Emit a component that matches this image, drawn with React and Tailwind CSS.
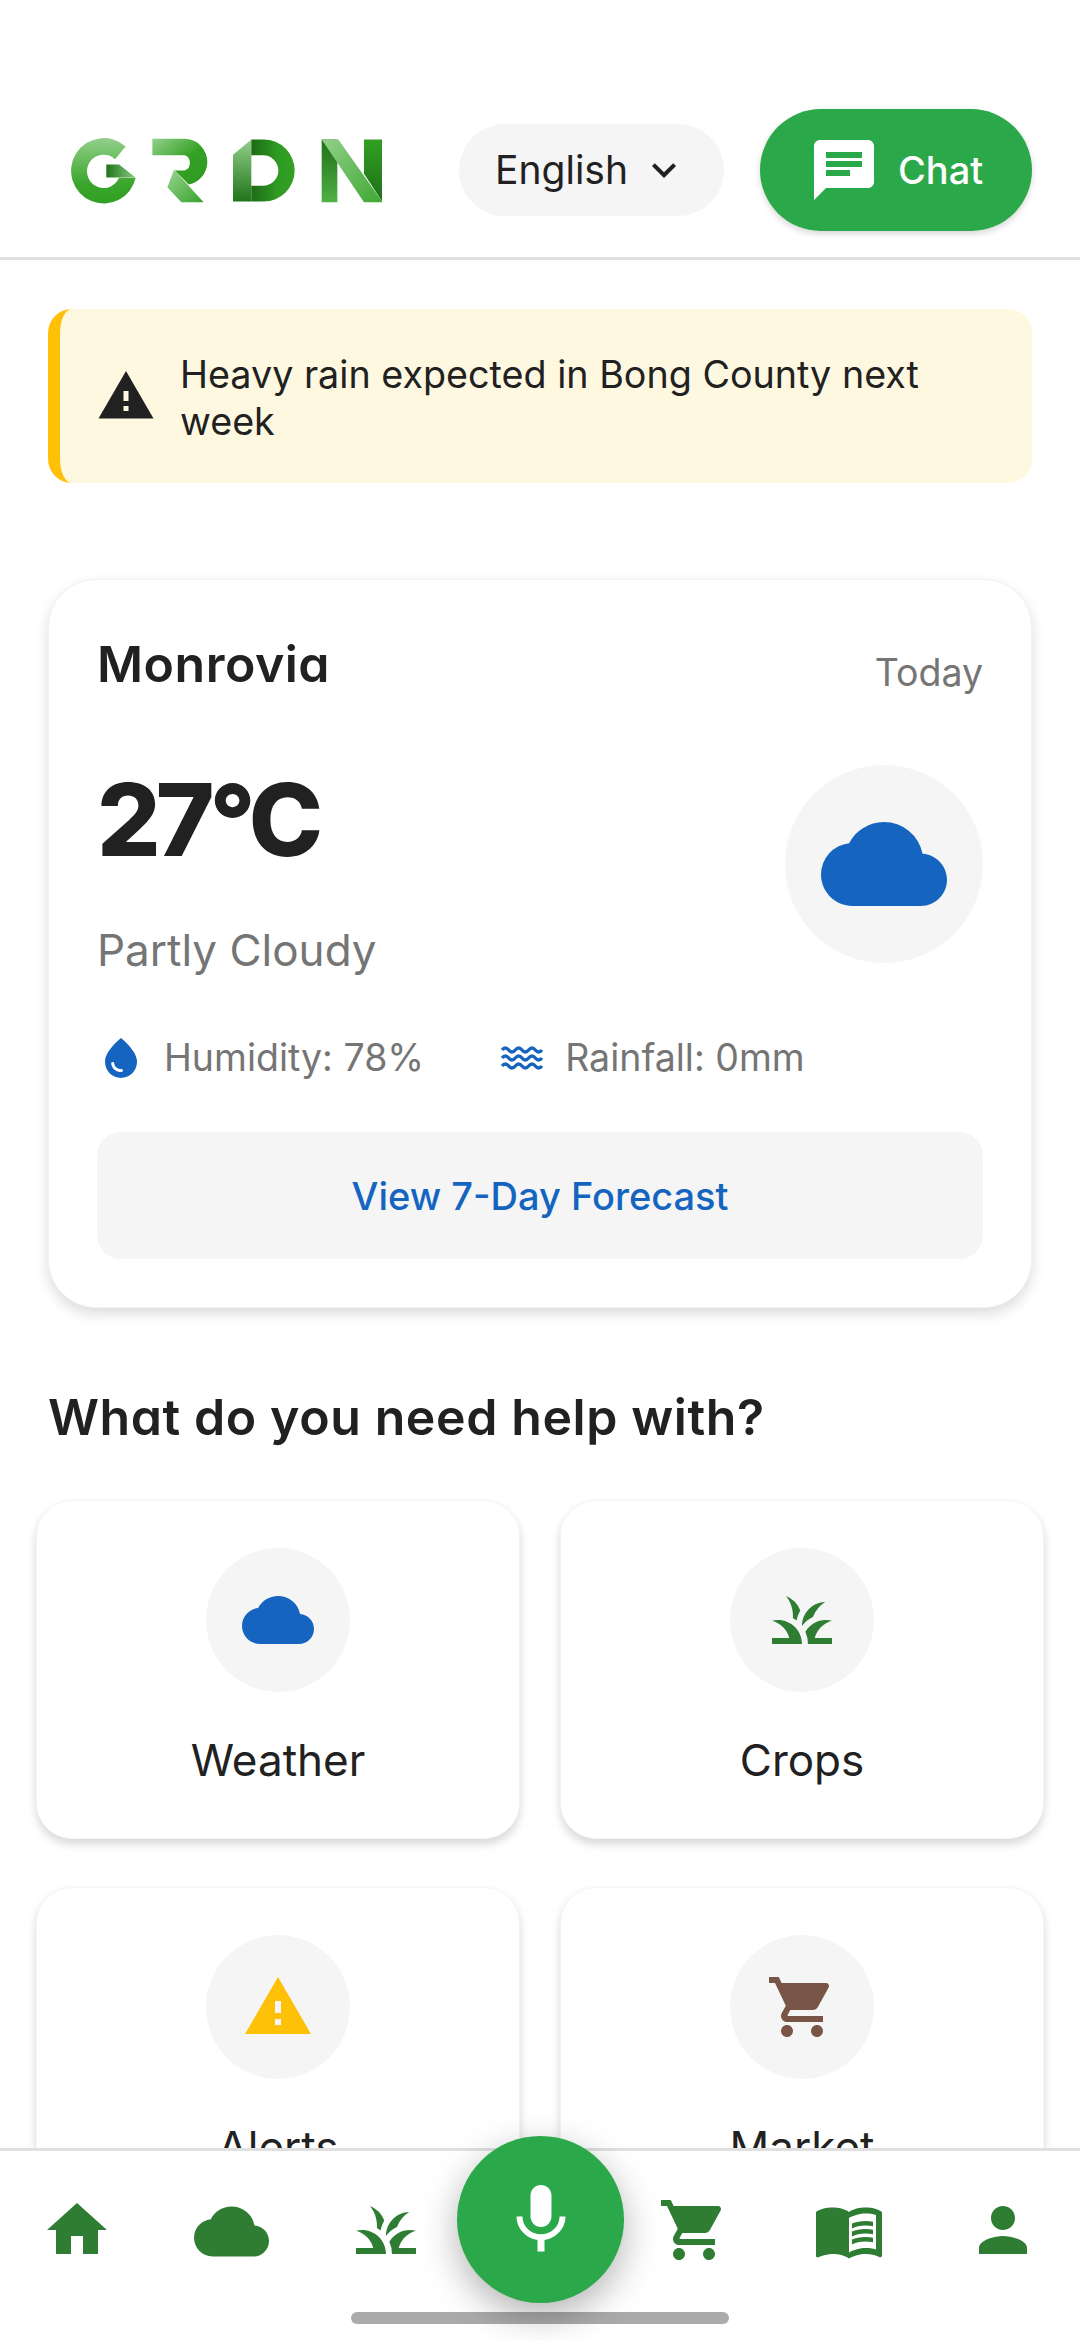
import {
  MdChat,
  MdCloud,
  MdGrass,
  MdHome,
  MdKeyboardArrowDown,
  MdMenuBook,
  MdMic,
  MdPerson,
  MdShoppingCart,
  MdWarning,
  MdWaterDrop,
} from "react-icons/md";

const tiles = [
  { label: "Weather", Icon: MdCloud, color: "text-[#1565c0]" },
  { label: "Crops", Icon: MdGrass, color: "text-[#2e7d32]" },
  { label: "Alerts", Icon: MdWarning, color: "text-[#ffc107]" },
  { label: "Market", Icon: MdShoppingCart, color: "text-[#795548]" },
];

const Logo = () => (
  <svg viewBox="85 80 945 200" className="ml-5 h-[67px] w-[315px]" role="img" aria-label="GRDN">
    <defs>
      <linearGradient id="lightTop" x1="0" y1="0" x2="0" y2="1">
        <stop offset="0" stopColor="#93d08b" />
        <stop offset="0.7" stopColor="#3ba52c" />
        <stop offset="1" stopColor="#30a022" />
      </linearGradient>
      <linearGradient id="gBar" x1="0" y1="0" x2="1" y2="0">
        <stop offset="0" stopColor="#1f7419" />
        <stop offset="1" stopColor="#8ccb82" />
      </linearGradient>
      <linearGradient id="rTop" x1="0" y1="0" x2="1" y2="1">
        <stop offset="0" stopColor="#93d08b" />
        <stop offset="0.55" stopColor="#33a024" />
        <stop offset="1" stopColor="#2f9a21" />
      </linearGradient>
      <linearGradient id="rLeg" x1="0" y1="0" x2="1" y2="1">
        <stop offset="0" stopColor="#9ad493" />
        <stop offset="1" stopColor="#37a329" />
      </linearGradient>
      <linearGradient id="dLeft" x1="0" y1="0" x2="0" y2="1">
        <stop offset="0" stopColor="#93d08b" />
        <stop offset="1" stopColor="#1f7419" />
      </linearGradient>
      <linearGradient id="dRight" x1="0" y1="0" x2="1" y2="0">
        <stop offset="0" stopColor="#1d6b16" />
        <stop offset="0.6" stopColor="#2f9a22" />
        <stop offset="1" stopColor="#33a024" />
      </linearGradient>
      <linearGradient id="nLeft" x1="0" y1="0" x2="0" y2="1">
        <stop offset="0" stopColor="#1e7018" />
        <stop offset="1" stopColor="#50b044" />
      </linearGradient>
      <linearGradient id="nRight" x1="0" y1="0" x2="0" y2="1">
        <stop offset="0" stopColor="#32a022" />
        <stop offset="1" stopColor="#1e6f18" />
      </linearGradient>
      <linearGradient id="nDiag" x1="0" y1="0" x2="1" y2="1">
        <stop offset="0" stopColor="#93d08b" />
        <stop offset="1" stopColor="#3fa832" />
      </linearGradient>
    </defs>
    {/* G */}
    <path
      d="M258 108A98 98 0 1 0 288 202H238A50 50 0 1 1 226 146Z"
      fill="url(#lightTop)"
    />
    <path d="M200 162H238L288 201H200Z" fill="url(#gBar)" />
    {/* R */}
    <path
      d="M338 85H435A68 70 0 0 1 503 155A68 70 0 0 1 447 222L405 180H435A22 24 0 0 0 435 134H338Z"
      fill="url(#rTop)"
    />
    <path d="M403 178L492 275H425L383 230Z" fill="url(#rLeg)" />
    {/* D */}
    <path d="M580 133L635 87V273H580Z" fill="url(#dLeft)" />
    <path
      d="M635 87H672A93 93 0 0 1 672 273H635V226H670A46 46 0 0 0 670 134H635Z"
      fill="url(#dRight)"
    />
    {/* N */}
    <path d="M846 87H893V275H846Z" fill="url(#nLeft)" />
    <path d="M973 87H1027V272L973 190Z" fill="url(#nRight)" />
    <path d="M846 87H896L1027 272V275H973Z" fill="url(#nDiag)" />
  </svg>
);

// three wavy lines, the rainfall mark on the weather card
const RainWaves = () => (
  <svg viewBox="0 0 24 24" className="ml-[74px] h-[48px] w-[48px] text-[#1565c0]" fill="none" stroke="currentColor" strokeWidth="1.7">
    <path d="M2 8q1.67-2 3.33 0t3.33 0t3.33 0t3.33 0t3.33 0t3.33 0" />
    <path d="M2 12q1.67-2 3.33 0t3.33 0t3.33 0t3.33 0t3.33 0t3.33 0" />
    <path d="M2 16q1.67-2 3.33 0t3.33 0t3.33 0t3.33 0t3.33 0t3.33 0" />
  </svg>
);

const Header = () => (
  <header className="flex h-[260px] shrink-0 items-end border-b-[3px] border-[#e0e0e0] pb-[26px] pl-[48px] pr-[48px]">
    <div className="flex h-[122px] w-full items-center justify-between">
      <Logo />
      <div className="flex items-center gap-[36px]">
        <div className="flex h-[92px] items-center gap-[12px] rounded-full bg-[#f5f5f5] pl-[36px] pr-[36px] text-[39px] text-[#212121]">
          <span>English</span>
          <MdKeyboardArrowDown size={48} />
        </div>
        <div className="flex h-[122px] w-[272px] items-center gap-[18px] rounded-full bg-[#2ba84a] pl-[48px] text-[38px] font-medium text-white shadow-[0_3px_6px_rgba(0,0,0,0.16)]">
          <MdChat size={72} />
          <span>Chat</span>
        </div>
      </div>
    </div>
  </header>
);

const WeatherCard = () => (
  <section className="mt-[96px] rounded-[48px] border border-[#f2f2f2] bg-white p-[48px] shadow-[0_6px_14px_rgba(0,0,0,0.14)]">
    <div className="flex items-end justify-between">
      <p className="text-[50px] font-semibold leading-[72px] tracking-[0.01em] text-[#212121] [font-feature-settings:'cv11']">Monrovia</p>
      <p className="text-[37.5px] leading-[54px] text-[#757575]">Today</p>
    </div>
    <div className="mt-[50px] flex items-center justify-between">
      <div>
        <p className="text-[100px] font-extrabold leading-[140px] tracking-[-0.05em] text-[#212121]">27°C</p>
        <p className="mt-[32px] text-[44px] leading-[56px] text-[#757575]">Partly Cloudy</p>
      </div>
      <div className="flex h-[198px] w-[198px] items-center justify-center rounded-full bg-[#f5f5f5] text-[#1565c0]">
        <MdCloud size={126} />
      </div>
    </div>
    <div className="mt-[53px] flex items-center text-[37.5px] leading-[54px] text-[#757575]">
      <MdWaterDrop size={48} className="text-[#1565c0]" />
      <span className="ml-[19px]">Humidity: 78%</span>
      <RainWaves />
      <span className="ml-[19px]">Rainfall: 0mm</span>
    </div>
    <div className="mt-[47px] flex h-[127px] items-center justify-center rounded-[24px] bg-[#f5f5f5] pt-[2px] text-[38px] font-medium text-[#1565c0]">
      View 7-Day Forecast
    </div>
  </section>
);

const Tile = ({ label, Icon, color }) => (
  <div className="flex h-[339px] flex-col items-center rounded-[36px] border border-[#f5f5f5] bg-white pt-[47px] shadow-[0_5px_10px_rgba(0,0,0,0.16)]">
    <div className={`flex h-[144px] w-[144px] items-center justify-center rounded-full bg-[#f5f5f5] ${color}`}>
      <Icon size={72} />
    </div>
    <p className="mt-[40px] text-[44px] leading-[56px] text-[#212121]">{label}</p>
  </div>
);

const BottomNav = () => (
  <nav className="relative z-10 grid h-[192px] shrink-0 grid-cols-7 border-t-[3px] border-[#e0e0e0] bg-white pb-[72px] pt-[43px] text-[#2e7d32]">
    <div className="flex justify-center"><MdHome size={72} /></div>
    <div className="flex justify-center"><MdCloud size={75} /></div>
    <div className="flex justify-center"><MdGrass size={72} /></div>
    <div />
    <div className="flex justify-center"><MdShoppingCart size={72} /></div>
    <div className="flex justify-center"><MdMenuBook size={72} /></div>
    <div className="flex justify-center"><MdPerson size={72} /></div>

    {/* home indicator */}
    <div className="absolute bottom-[16px] left-[351px] h-[12px] w-[378px] rounded-full bg-[#ababab]" />
    {/* mic button */}
    <div className="absolute left-[457px] top-[-15px] flex h-[167px] w-[167px] items-center justify-center rounded-full bg-[#2ba84a] text-white shadow-[0_12px_36px_rgba(0,0,0,0.3)]">
      <MdMic size={84} />
    </div>
  </nav>
);

export default function App() {
  return (
    <div className="flex h-[2340px] flex-col overflow-hidden bg-white font-['Inter',sans-serif]">
      <Header />
      <main className="min-h-0 flex-1 overflow-hidden">
        <div className="px-[48px]">
          <div className="mt-[49px] flex items-center gap-[24px] rounded-[24px] border-l-[12px] border-[#ffc107] bg-[#fff8e1] pb-[38px] pl-[36px] pr-[36px] pt-[42px]">
            <MdWarning size={60} className="mt-[-4px] shrink-0 text-[#212121]" />
            <p className="text-[37.7px] leading-[47px] text-[#212121]">
              Heavy rain expected in Bong County next week
            </p>
          </div>
          <WeatherCard />
          <h2 className="mt-[73px] text-[50px] font-semibold leading-[72px] tracking-[0.012em] text-[#212121] [font-feature-settings:'cv11']">
            What do you need help with?
          </h2>
        </div>
        <div className="mt-[47px] grid grid-cols-2 gap-x-[40px] gap-y-[48px] px-[36px]">
          {tiles.map((tile) => (
            <Tile key={tile.label} {...tile} />
          ))}
        </div>
      </main>
      <BottomNav />
    </div>
  );
}
